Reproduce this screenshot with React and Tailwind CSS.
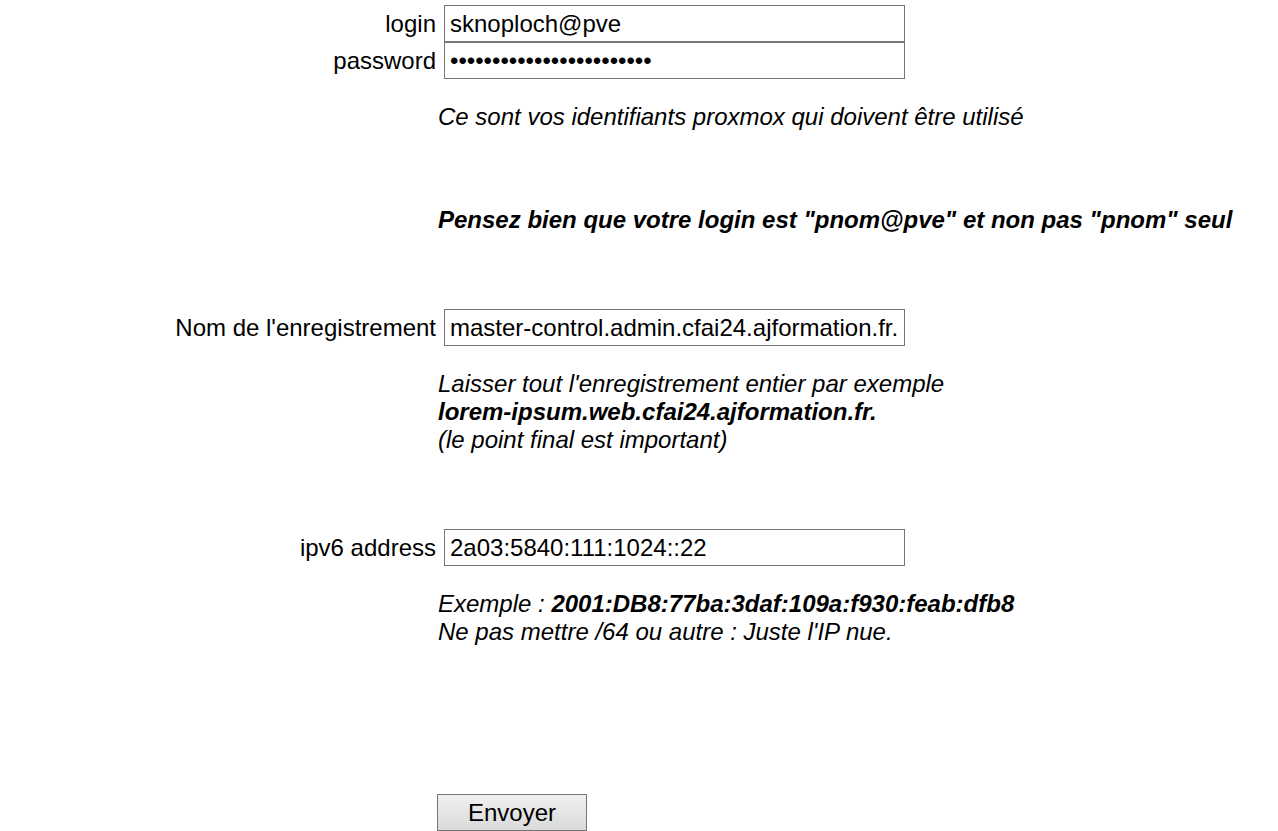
export default function App() {
  const inputCls =
    "ml-[7px] w-[461px] h-[37px] border border-[#767676] bg-white px-[5px] text-[24px] text-black outline-none font-['Liberation_Sans',Arial,sans-serif]";
  return (
    <div className="w-[1278px] h-[831px] overflow-hidden bg-white text-black text-[24px] font-['Liberation_Sans',Arial,sans-serif]">
      <form className="flex flex-col" onSubmit={(e) => e.preventDefault()}>
        <div className="flex items-center pt-[5px]">
          <label className="w-[437px] text-right pr-[1px]">login</label>
          <input className={inputCls} type="text" defaultValue="sknoploch@pve" />
        </div>
        <div className="flex items-center">
          <label className="w-[437px] text-right pr-[1px]">password</label>
          <input className={inputCls} type="password" defaultValue="abcdefghijklmnopqrstuvwx" />
        </div>
        <div className="flex mt-[24px] leading-[28px]">
          <div className="w-[437px]" />
          <p className="pl-[1px] italic">Ce sont vos identifiants proxmox qui doivent être utilisé</p>
        </div>
        <div className="flex mt-[75px] leading-[28px]">
          <div className="w-[437px]" />
          <p className="pl-[1px] italic font-bold">Pensez bien que votre login est "pnom@pve" et non pas "pnom" seul</p>
        </div>
        <div className="flex items-center mt-[75px]">
          <label className="w-[437px] text-right pr-[1px]">Nom de l'enregistrement</label>
          <input className={inputCls} type="text" defaultValue="master-control.admin.cfai24.ajformation.fr." />
        </div>
        <div className="flex mt-[24px] leading-[28px]">
          <div className="w-[437px]" />
          <div className="pl-[1px] italic">
            <div>Laisser tout l'enregistrement entier par exemple</div>
            <div className="font-bold">lorem-ipsum.web.cfai24.ajformation.fr.</div>
            <div>(le point final est important)</div>
          </div>
        </div>
        <div className="flex items-center mt-[75px]">
          <label className="w-[437px] text-right pr-[1px]">ipv6 address</label>
          <input className={inputCls} type="text" defaultValue="2a03:5840:111:1024::22" />
        </div>
        <div className="flex mt-[24px] leading-[28px]">
          <div className="w-[437px]" />
          <div className="pl-[1px] italic">
            <div>
              Exemple : <span className="font-bold">2001:DB8:77ba:3daf:109a:f930:feab:dfb8</span>
            </div>
            <div>Ne pas mettre /64 ou autre : Juste l'IP nue.</div>
          </div>
        </div>
        <div className="flex mt-[148px]">
          <div className="w-[437px]" />
          <button
            type="submit"
            className="w-[150px] h-[37px] border border-[#767676] bg-gradient-to-b from-[#f0f0f0] to-[#dadada] text-[24px] leading-none text-black font-['Liberation_Sans',Arial,sans-serif]"
          >
            Envoyer
          </button>
        </div>
      </form>
    </div>
  );
}
